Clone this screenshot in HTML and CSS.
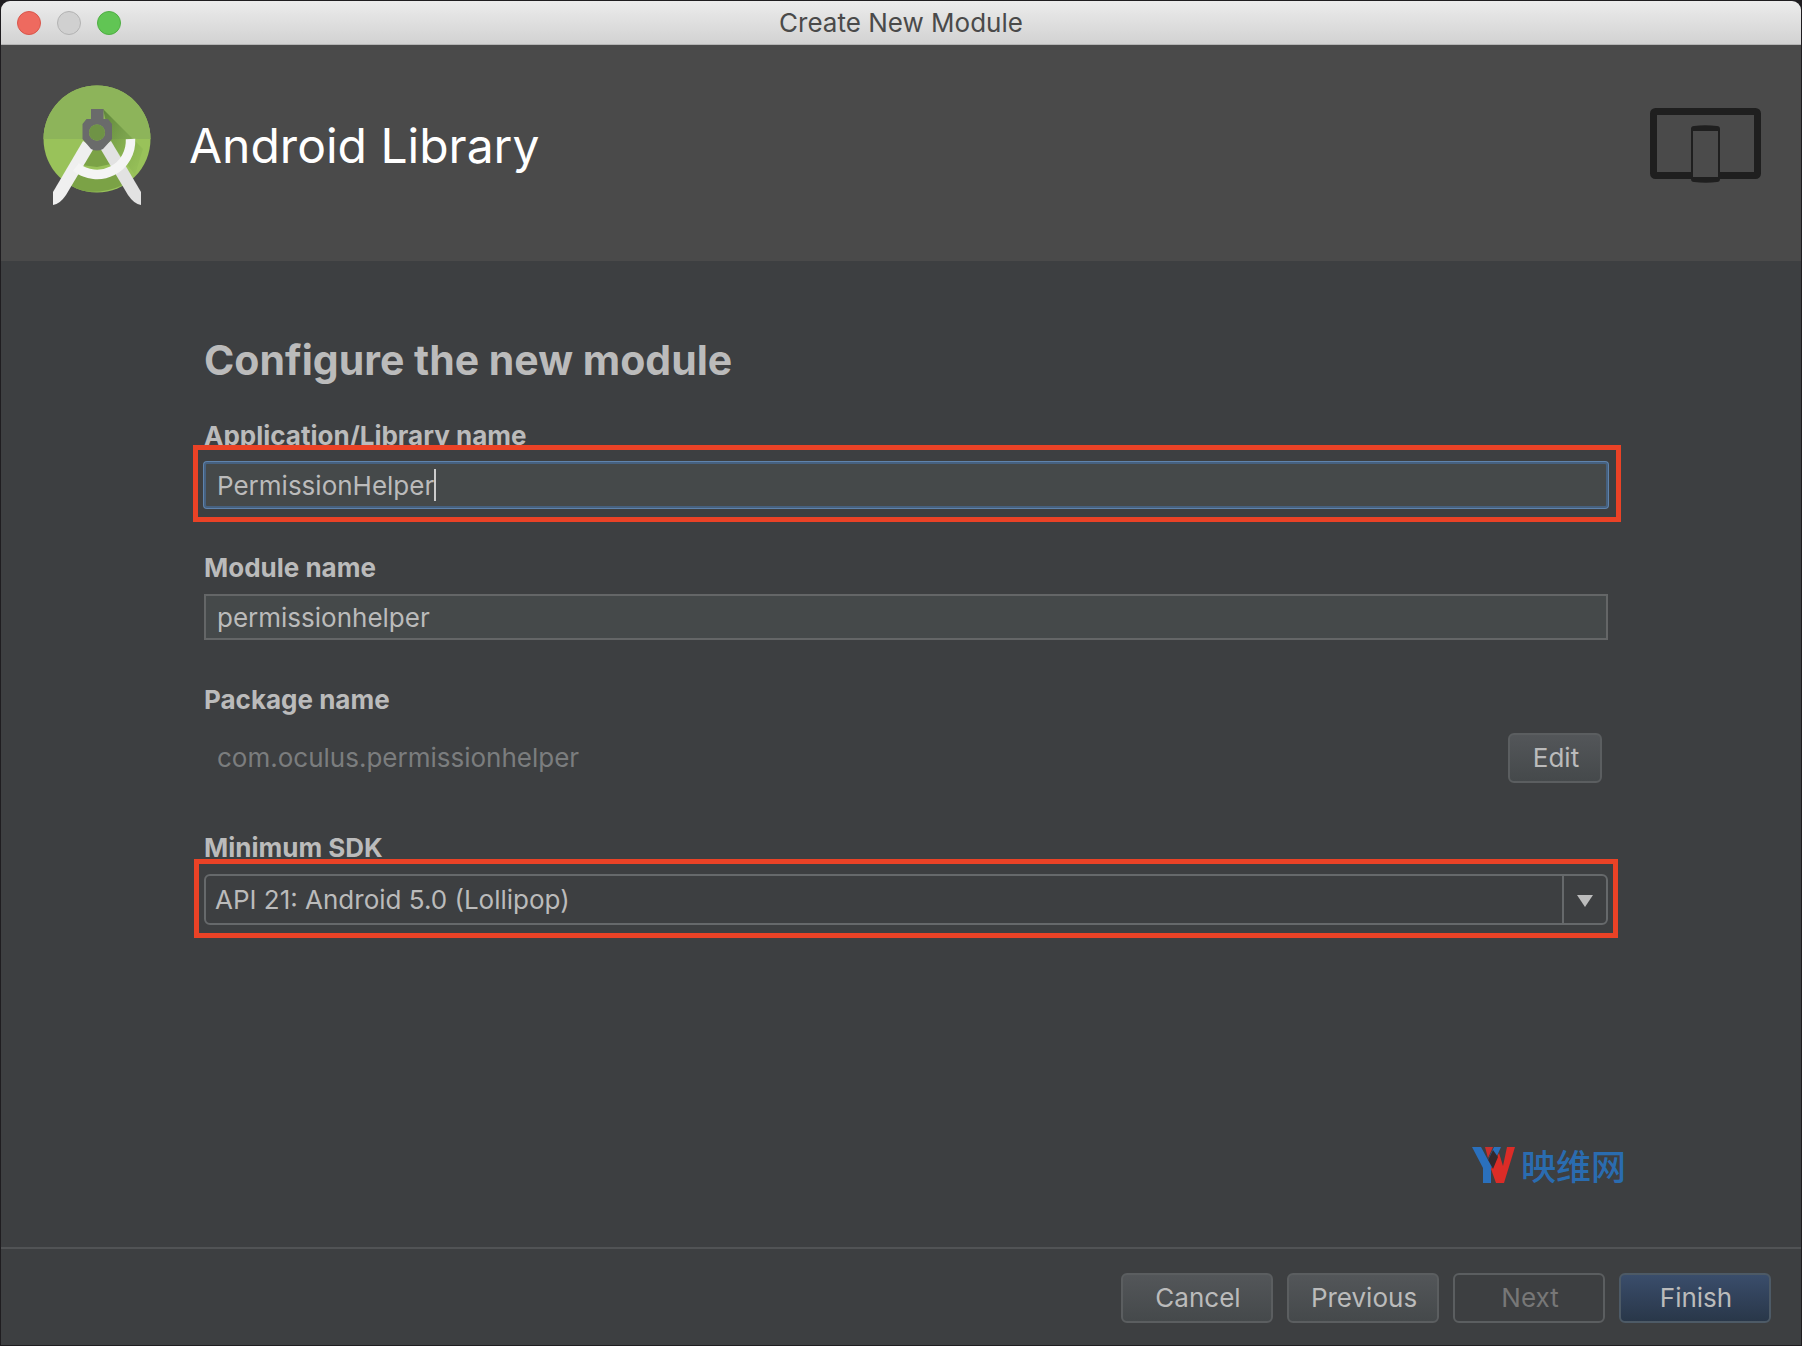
FILE: index.html
```html
<!DOCTYPE html>
<html lang="en">
<head>
<meta charset="utf-8">
<title>Create New Module</title>
<link rel="stylesheet" href="styles.css">
</head>
<body>
<div class="window">
  <div class="titlebar">
    <div class="lights">
      <button class="light light-close" type="button" aria-label="Close"></button>
      <button class="light light-minimize" type="button" aria-label="Minimize" disabled></button>
      <button class="light light-zoom" type="button" aria-label="Zoom"></button>
    </div>
    <span class="window-title">Create New Module</span>
  </div>

  <header class="banner">
    <svg class="logo" viewBox="0 0 109 121" aria-hidden="true">
      <defs>
        <linearGradient id="shade" x1="0" y1="0" x2="1" y2="1">
          <stop offset="0" stop-color="#4f7530" stop-opacity=".75"/>
          <stop offset="1" stop-color="#6f9c40" stop-opacity="0"/>
        </linearGradient>
        <clipPath id="disc"><circle cx="54" cy="54" r="53.5"/></clipPath>
      </defs>
      <circle cx="54" cy="54" r="53.5" fill="#99c25a"/>
      <path d="M.5 54a53.5 53.5 0 0 1 107 0z" fill="#8db45a"/>
      <g clip-path="url(#disc)">
        <path d="M60 24 100 64 92 90 68 58z" fill="url(#shade)"/>
        <path d="M49 63 60 63 68 79 54 82 38 80z" fill="#7ba246"/>
        <path d="M33 89Q54 97 74 88L80 100Q54 112 24 103z" fill="#7ba246"/>
      </g>
      <path d="M40 56 51 63 23 110Q17 119 10 120L10 107z" fill="#efefef"/>
      <path d="M68 56 57 63 85 110Q91 119 98 120L98 107z" fill="#e2e2e2"/>
      <path d="M87.500 54A33.500 33.500 0 0 1 33 82" fill="none" stroke="#f4f4f4" stroke-width="9.500"/>
      <path fill-rule="evenodd" d="M48 24h12.500v10H65l4 5v15L60 64q-6 3-12 0L39.500 54V39l4-5H48zM54 39.500a8 8 0 1 0 0 16 8 8 0 0 0 0-16z" fill="#6a6b6b"/>
      <circle cx="54" cy="47.500" r="8" fill="#6f9346"/>
    </svg>
    <h1 class="banner-title">Android Library</h1>
    <svg class="devices" viewBox="0 0 111 76" aria-hidden="true">
      <rect x="3.500" y="3.500" width="104" height="64" rx="2" fill="none" stroke="#1f1f1f" stroke-width="7"/>
      <path d="M41 21q0-3 3-3 11-1.500 23 0 3 0 3 3v50q0 3-3 3-11 1.500-23 0-3 0-3-3z" fill="#1f1f1f"/>
      <path d="M43 23h25v46H43z" fill="#4b4b4b"/>
    </svg>
  </header>

  <form class="form" id="module-form">
    <h2 class="form-title">Configure the new module</h2>

    <div class="field">
      <label for="app-name">Application/Library name</label>
      <div class="control">
        <input class="text text-focused" id="app-name" type="text" value="PermissionHelper" spellcheck="false">
        <span class="caret"></span>
        <span class="callout callout-wide"></span>
      </div>
    </div>

    <div class="field">
      <label for="module-name">Module name</label>
      <input class="text" id="module-name" type="text" value="permissionhelper" spellcheck="false">
    </div>

    <div class="field field-package">
      <label for="package-name">Package name</label>
      <div class="package">
        <input class="package-name" id="package-name" type="text" value="com.oculus.permissionhelper" disabled>
        <button class="button button-edit" type="button">Edit</button>
      </div>
    </div>

    <div class="field">
      <label for="min-sdk">Minimum SDK</label>
      <div class="control">
        <select class="select" id="min-sdk">
          <option>API 21: Android 5.0 (Lollipop)</option>
        </select>
        <svg class="arrow" viewBox="0 0 46 51" aria-hidden="true">
          <path d="M1 1v49" stroke="#66696b" stroke-width="2"/>
          <path d="M15 21h16L23 33z" fill="#bcbcbc"/>
        </svg>
        <span class="callout"></span>
      </div>
    </div>

    <div class="brand">
      <svg class="brand-mark" viewBox="0 0 43 36" aria-hidden="true">
        <path d="M0 0h9l7 13L22 0h7L19 22v14h-8V21z" fill="#2a70bd"/>
        <path d="M22 16 27 6l4 13L35 0h8L32 36h-8L19 22z" fill="#db2c27"/>
        <path d="M13 0h8l-5 11z" fill="#c9302d"/>
        <path d="M21 3 26 10 21 22 16 13z" fill="#34292d"/>
      </svg>
      <span class="brand-name" lang="zh">映维网</span>
    </div>
  </form>

  <footer class="actions">
    <button class="button" type="button">Cancel</button>
    <button class="button" type="button">Previous</button>
    <button class="button" type="button" disabled>Next</button>
    <button class="button button-primary" type="submit" form="module-form">Finish</button>
  </footer>
</div>
</body>
</html>
```
FILE: styles.css
```css
* {
  box-sizing: border-box;
}

body {
  margin: 0;
  background: #1f1d20;
  color: #bbbbbb;
  font-family: Inter, "Liberation Sans", sans-serif;
  font-size: 26px;
  line-height: 32px;
}

button,
input,
select {
  margin: 0;
  color: inherit;
  font: inherit;
}

.window {
  display: flex;
  flex-direction: column;
  min-height: 100vh;
  border: 1px solid #1f1d20;
  border-radius: 10px 10px 0 0;
  background: #3d3f41;
  overflow: hidden;
}

.titlebar {
  display: grid;
  grid-template-columns: 1fr auto 1fr;
  align-items: center;
  height: 44px;
  padding: 1px 16px 0;
  border-bottom: 1px solid #b4b4b4;
  background: linear-gradient(#ececec, #d2d2d2);
}

.lights {
  display: flex;
  gap: 16px;
}

.light {
  width: 24px;
  height: 24px;
  padding: 0;
  border: 1px solid;
  border-radius: 50%;
}

.light-close {
  border-color: #d9564b;
  background: #ee6a5f;
}

.light-minimize {
  border-color: #b3b3b3;
  background: #d0d0d0;
}

.light-zoom {
  border-color: #4fae43;
  background: #61c554;
}

.window-title {
  color: #4a4a4a;
}

.banner {
  display: flex;
  align-items: flex-start;
  height: 216px;
  padding: 40px 40px 0 42px;
  background: #4a4a4a;
}

.logo {
  width: 109px;
  height: 121px;
}

.banner-title {
  flex: 1;
  margin: 31px 0 0 37px;
  color: #ffffff;
  font-size: 48px;
  font-weight: 400;
  line-height: 60px;
}

.devices {
  width: 111px;
  height: 76px;
  margin-top: 23px;
}

.form {
  display: flex;
  flex: 1;
  flex-direction: column;
  padding: 73px 193px 64px 203px;
}

.form-title {
  margin: 0 0 34px;
  font-size: 41px;
  font-weight: 700;
  line-height: 52px;
}

.field {
  display: flex;
  flex-direction: column;
  gap: 10px;
  margin-bottom: 44px;
}

.field label {
  align-self: flex-start;
  font-weight: 700;
}

.control {
  position: relative;
  display: flex;
}

.text {
  width: 100%;
  height: 46px;
  padding: 0 11px;
  border: 2px solid #646667;
  border-radius: 0;
  background: #45494a;
  outline: none;
}

.text-focused {
  border-color: #466180;
  border-radius: 3px;
  box-shadow: 0 0 0 1px #5f83ac;
}

.caret {
  position: absolute;
  top: 7px;
  left: 230px;
  width: 2px;
  height: 32px;
  background: #cccccc;
}

.callout {
  position: absolute;
  inset: -15px -10px -13px;
  border: 5px solid #ea4226;
  pointer-events: none;
}

.callout-wide {
  inset: -17px -13px -14px -11px;
}

.field-package {
  gap: 17px;
  margin-bottom: 49px;
}

.package {
  display: flex;
  align-items: center;
  padding-right: 6px;
}

.package-name {
  flex: 1;
  padding: 0 13px;
  border: 0;
  background: transparent;
  color: #7b7d7e;
}

.select {
  width: 100%;
  height: 51px;
  padding: 0 56px 0 9px;
  border: 2px solid #66696b;
  border-radius: 6px;
  background: #3d3f41;
  appearance: none;
}

.arrow {
  position: absolute;
  top: 0;
  right: 0;
  width: 46px;
  height: 51px;
  pointer-events: none;
}

.brand {
  display: flex;
  align-items: center;
  justify-content: flex-end;
  gap: 6px;
  margin: auto -18px 0 0;
}

.brand-mark {
  width: 43px;
  height: 36px;
}

.brand-name {
  color: #2a6cb0;
  font-family: "Noto Sans CJK SC", sans-serif;
  font-size: 35px;
  font-weight: 500;
  line-height: 36px;
}

.actions {
  display: flex;
  justify-content: flex-end;
  gap: 14px;
  padding: 24px 30px 22px;
  border-top: 2px solid #515355;
}

.button {
  width: 152px;
  height: 50px;
  padding: 0 0 0 2px;
  border: 2px solid #5b5e60;
  border-radius: 6px;
  background: linear-gradient(#535659, #45494b);
}

.button:disabled {
  background: none;
  color: #777777;
}

.button-edit {
  width: 94px;
}

.button-primary {
  border-color: #4d5a66;
  background: linear-gradient(#3a4d6b, #293749);
}
```
